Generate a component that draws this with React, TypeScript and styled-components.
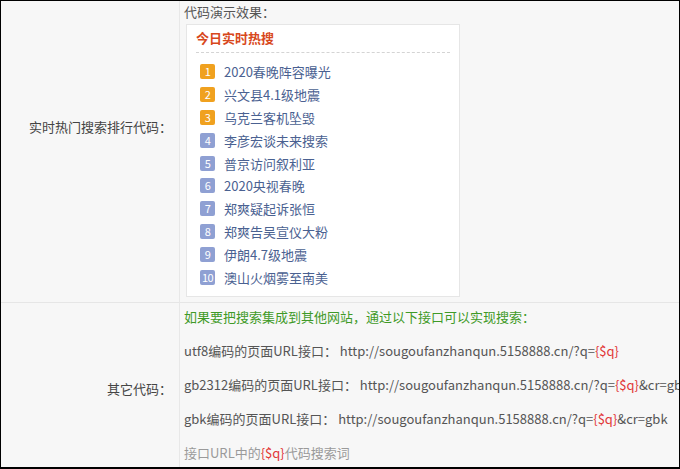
import { FC } from 'react';
import styled, { createGlobalStyle } from 'styled-components';

const GlobalStyle = createGlobalStyle`
    html, body {
        margin: 0;
        padding: 0;
        background: #fff;
    }
    body {
        font-family: "Microsoft YaHei", "Noto Sans CJK SC", "Noto Sans", sans-serif;
    }
`;

const Frame = styled.div`
    width: 680px;
    height: 469px;
    box-sizing: border-box;
    border: 1px solid #000;
    border-bottom-width: 2px;
    background-color: #f7f7f7;
    overflow: hidden;
    display: grid;
    grid-template-columns: 179px 1fr;
    grid-template-rows: 302px 164px;
    font-size: 13px;
    color: #555;
`;

const Label = styled.div<{ $top?: boolean }>`
    display: flex;
    align-items: center;
    justify-content: flex-end;
    padding-right: 7px;
    padding-bottom: ${(p) => (p.$top ? '50px' : '0')};
    padding-top: ${(p) => (p.$top ? '0' : '6px')};
    border-right: 1px solid #e8e8e8;
    border-bottom: ${(p) => (p.$top ? '1px solid #e6e6e6' : 'none')};
    color: #444;
    white-space: nowrap;
`;

const Cell = styled.div<{ $top?: boolean }>`
    padding-left: 4px;
    border-bottom: ${(p) => (p.$top ? '1px solid #e6e6e6' : 'none')};
    white-space: nowrap;
    min-width: 0;
    overflow: hidden;
`;

const Caption = styled.div`
    line-height: 18px;
    margin-top: 2px;
    color: #555;
`;

const HotBox = styled.div`
    width: 274px;
    height: 273px;
    box-sizing: border-box;
    margin-top: 3px;
    margin-left: 2px;
    background-color: #fff;
    border: 1px solid #e6e6e6;
    padding: 0 9px;
`;

const HotTitle = styled.div`
    color: #d8481c;
    font-weight: bold;
    line-height: 18px;
    padding: 4px 0 5px;
    border-bottom: 1px dashed #d4d4d4;
`;

const HotList = styled.ul`
    list-style: none;
    margin: 0;
    padding: 7px 0 0 4px;
`;

const HotItem = styled.li`
    display: flex;
    align-items: center;
    gap: 9px;
    height: 22.9px;
`;

const Rank = styled.span<{ $top: boolean }>`
    width: 15px;
    height: 15px;
    border-radius: 2px;
    background-color: ${(p) => (p.$top ? '#f0a11f' : '#8fa0d3')};
    color: #fff;
    font-size: 11px;
    line-height: 15px;
    text-align: center;
    flex-shrink: 0;
    letter-spacing: -0.5px;
`;

const HotText = styled.span`
    color: #4a6191;
    font-size: 13px;
`;

const Lines = styled.div`
    padding-top: 5px;
`;

const Line = styled.div<{ $tone?: 'green' | 'gray' }>`
    height: 34px;
    line-height: 18px;
    color: ${(p) => (p.$tone === 'green' ? '#3f9a27' : p.$tone === 'gray' ? '#9a9a9a' : '#555')};
`;

const Var = styled.span`
    color: #e2393a;
`;

const hotWords = [
    '2020春晚阵容曝光',
    '兴文县4.1级地震',
    '乌克兰客机坠毁',
    '李彦宏谈未来搜索',
    '普京访问叙利亚',
    '2020央视春晚',
    '郑爽疑起诉张恒',
    '郑爽告吴宣仪大粉',
    '伊朗4.7级地震',
    '澳山火烟雾至南美',
];

const HOST = 'http://sougoufanzhanqun.5158888.cn/?q=';

const App: FC = () => {
    return (
        <>
            <GlobalStyle />
            <Frame>
                <Label $top>实时热门搜索排行代码：</Label>
                <Cell $top>
                    <Caption>代码演示效果：</Caption>
                    <HotBox>
                        <HotTitle>今日实时热搜</HotTitle>
                        <HotList>
                            {hotWords.map((w, i) => (
                                <HotItem key={w}>
                                    <Rank $top={i < 3}>{i + 1}</Rank>
                                    <HotText>{w}</HotText>
                                </HotItem>
                            ))}
                        </HotList>
                    </HotBox>
                </Cell>
                <Label>其它代码：</Label>
                <Cell>
                    <Lines>
                        <Line $tone="green">如果要把搜索集成到其他网站，通过以下接口可以实现搜索：</Line>
                        <Line>
                            utf8编码的页面URL接口：&nbsp;{HOST}
                            <Var>{'{$q}'}</Var>
                        </Line>
                        <Line>
                            gb2312编码的页面URL接口：&nbsp;{HOST}
                            <Var>{'{$q}'}</Var>&amp;cr=gb2312
                        </Line>
                        <Line>
                            gbk编码的页面URL接口：&nbsp;{HOST}
                            <Var>{'{$q}'}</Var>&amp;cr=gbk
                        </Line>
                        <Line $tone="gray">
                            接口URL中的<Var>{'{$q}'}</Var>代码搜索词
                        </Line>
                    </Lines>
                </Cell>
            </Frame>
        </>
    );
};

export default App;
